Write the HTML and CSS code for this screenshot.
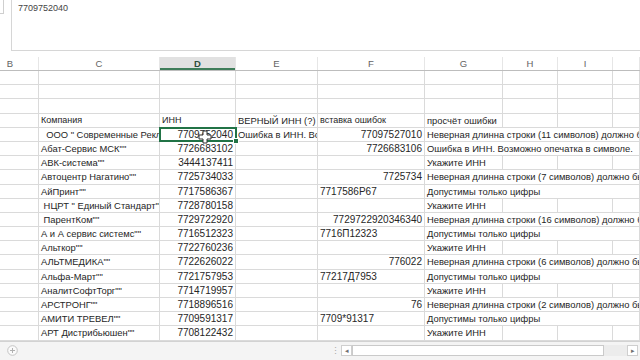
FILE: index.html
```html
<!DOCTYPE html>
<html lang="ru">
<head>
<meta charset="utf-8">
<title>ИНН</title>
<link rel="stylesheet" href="styles.css">
</head>
<body>
<div class="app">
  <div class="formula">
    <div class="namecol"><div class="namebox"></div></div>
    <div class="fx">7709752040</div>
  </div>

  <div class="sheet">
    <div class="row hdr">
      <div class="c first">B</div><div class="c">C</div><div class="c act">D</div><div class="c">E</div><div class="c">F</div><div class="c">G</div><div class="c">H</div><div class="c">I</div><div class="c"></div>
    </div>

    <div class="row"><div class="c"></div><div class="c"></div><div class="c"></div><div class="c"></div><div class="c"></div><div class="c"></div><div class="c"></div><div class="c"></div><div class="c"></div></div>
    <div class="row"><div class="c"></div><div class="c"></div><div class="c"></div><div class="c"></div><div class="c"></div><div class="c"></div><div class="c"></div><div class="c"></div><div class="c"></div></div>
    <div class="row"><div class="c"></div><div class="c"></div><div class="c"></div><div class="c"></div><div class="c"></div><div class="c"></div><div class="c"></div><div class="c"></div><div class="c"></div></div>

    <div class="row"><div class="c"></div><div class="c small">Компания</div><div class="c small">ИНН</div><div class="c">ВЕРНЫЙ ИНН (?)</div><div class="c small">вставка ошибок</div><div class="c">просчёт ошибки</div><div class="c"></div><div class="c"></div><div class="c"></div></div>

    <div class="row"><div class="c"></div><div class="c">  ООО " Современные Рекламные Технологии""</div><div class="c r n sel">7709752040</div><div class="c">Ошибка в ИНН. Возможно опечатка в символе.</div><div class="c r n">77097527010</div><div class="c long">Неверная длинна строки (11 символов) должно быть 10 или 12</div></div>

    <div class="row"><div class="c"></div><div class="c">Абат-Сервис МСК""</div><div class="c r n">7726683102</div><div class="c"></div><div class="c r n">7726683106</div><div class="c long">Ошибка в ИНН. Возможно опечатка в символе.</div></div>

    <div class="row"><div class="c"></div><div class="c">АВК-система""</div><div class="c r n">3444137411</div><div class="c"></div><div class="c"></div><div class="c">Укажите ИНН</div><div class="c"></div><div class="c"></div><div class="c"></div></div>

    <div class="row"><div class="c"></div><div class="c">Автоцентр Нагатино""</div><div class="c r n">7725734033</div><div class="c"></div><div class="c r n">7725734</div><div class="c long">Неверная длинна строки (7 символов) должно быть 10 или 12</div></div>

    <div class="row"><div class="c"></div><div class="c">АйПринт""</div><div class="c r n">7717586367</div><div class="c"></div><div class="c n">7717586Р67</div><div class="c long">Допустимы только цифры</div></div>

    <div class="row"><div class="c"></div><div class="c"> НЦРТ " Единый Стандарт""</div><div class="c r n">7728780158</div><div class="c"></div><div class="c"></div><div class="c">Укажите ИНН</div><div class="c"></div><div class="c"></div><div class="c"></div></div>

    <div class="row"><div class="c"></div><div class="c"> ПарентКом""</div><div class="c r n">7729722920</div><div class="c"></div><div class="c r n">7729722920346340</div><div class="c long">Неверная длинна строки (16 символов) должно быть 10 или 12</div></div>

    <div class="row"><div class="c"></div><div class="c">А и А сервис системс""</div><div class="c r n">7716512323</div><div class="c"></div><div class="c n">7716П12323</div><div class="c long">Допустимы только цифры</div></div>

    <div class="row"><div class="c"></div><div class="c">Альткор""</div><div class="c r n">7722760236</div><div class="c"></div><div class="c"></div><div class="c">Укажите ИНН</div><div class="c"></div><div class="c"></div><div class="c"></div></div>

    <div class="row"><div class="c"></div><div class="c">АЛЬТМЕДИКА""</div><div class="c r n">7722626022</div><div class="c"></div><div class="c r n">776022</div><div class="c long">Неверная длинна строки (6 символов) должно быть 10 или 12</div></div>

    <div class="row"><div class="c"></div><div class="c">Альфа-Март""</div><div class="c r n">7721757953</div><div class="c"></div><div class="c n">77217Д7953</div><div class="c long">Допустимы только цифры</div></div>

    <div class="row"><div class="c"></div><div class="c">АналитСофтТорг""</div><div class="c r n">7714719957</div><div class="c"></div><div class="c"></div><div class="c">Укажите ИНН</div><div class="c"></div><div class="c"></div><div class="c"></div></div>

    <div class="row"><div class="c"></div><div class="c">АРСТРОНГ""</div><div class="c r n">7718896516</div><div class="c"></div><div class="c r n">76</div><div class="c long">Неверная длинна строки (2 символов) должно быть 10 или 12</div></div>

    <div class="row"><div class="c"></div><div class="c">АМИТИ ТРЕВЕЛ""</div><div class="c r n">7709591317</div><div class="c"></div><div class="c n">7709*91317</div><div class="c long">Допустимы только цифры</div></div>

    <div class="row"><div class="c"></div><div class="c">АРТ Дистрибьюшен""</div><div class="c r n">7708122432</div><div class="c"></div><div class="c"></div><div class="c">Укажите ИНН</div><div class="c"></div><div class="c"></div><div class="c"></div></div>

    <svg class="cursor" width="14" height="14" viewBox="0 0 14 14">
      <path d="M5 1h4v4h4v4h-4v4h-4v-4h-4v-4h4z" fill="#fff" stroke="#333" stroke-width="1"/>
    </svg>
  </div>

  <div class="tabs">
    <div class="plus">
      <svg width="11" height="11" viewBox="0 0 11 11"><circle cx="5.5" cy="5.5" r="4.8" fill="#fafafa" stroke="#c4c4c4"/><path d="M5.5 3v5M3 5.5h5" stroke="#b0b0b0" stroke-width="1"/></svg>
    </div>
    <div class="scroll">
      <span class="dots">⋮</span>
      <span class="arrow">◂</span>
      <span class="track"><span class="thumb"></span></span>
      <span class="arrow">▸</span>
    </div>
  </div>
</div>
</body>
</html>
```

FILE: styles.css
```css
html, body {
  margin: 0;
  padding: 0;
  background: #ffffff;
}
body {
  width: 640px;
  height: 360px;
  overflow: hidden;
  font-family: "Liberation Sans", Arial, sans-serif;
  color: #262626;
}
.app {
  width: 640px;
  height: 360px;
  display: flex;
  flex-direction: column;
}

/* formula bar */
.formula {
  display: flex;
  height: 51px;
  flex: none;
}
.namecol {
  width: 11px;
  flex: none;
}
.namebox {
  width: 3px;
  height: 13px;
  border-right: 1px solid #cfcfcf;
  border-bottom: 1px solid #cfcfcf;
}
.fx {
  flex: 1;
  border-left: 1px solid #d6d6d6;
  border-bottom: 1px solid #d6d6d6;
  padding: 3px 6px;
  font-size: 9px;
  line-height: 11px;
  color: #444;
}

/* sheet */
.sheet {
  position: relative;
  margin-top: 6px;
  flex: none;
}
.row {
  display: grid;
  grid-template-columns: 39px 121px 76px 82px 107px 78px 55px 55px 1fr;
  height: 14.2px;
  box-sizing: border-box;
  border-bottom: 1px solid #dadada;
}
.c {
  box-sizing: border-box;
  border-right: 1px solid #dadada;
  padding: 0 2px;
  font-size: 9.4px;
  line-height: 13px;
  white-space: pre;
  overflow: hidden;
}
.c.small {
  font-size: 9px;
}
.c.n {
  font-size: 10px;
}
.c.r {
  text-align: right;
}
.c.long {
  grid-column: 6 / -1;
}
.row.hdr {
  height: 14px;
  border-bottom: 1px solid #bdbdbd;
}
.hdr .c {
  text-align: center;
  color: #636363;
  font-size: 9.5px;
  line-height: 13px;
  border-right: 1px solid #e6e6e6;
}
.hdr .c.first {
  padding-right: 20px;
}
.hdr .c.act {
  background: #e1e1e1;
  color: #2f4f3c;
  font-weight: bold;
  box-shadow: inset 0 -2px 0 #3f7d5a;
}
.c.sel {
  position: relative;
  overflow: visible;
  z-index: 2;
}
.c.sel::after {
  content: "";
  position: absolute;
  left: -1px;
  top: -1px;
  right: -2px;
  bottom: -1px;
  border: 2px solid #217346;
  box-sizing: border-box;
}
.c.sel::before {
  content: "";
  position: absolute;
  right: -4px;
  bottom: -3px;
  width: 4px;
  height: 4px;
  background: #217346;
  border: 1px solid #fff;
  z-index: 3;
}
.cursor {
  position: absolute;
  left: 198px;
  top: 73px;
  z-index: 5;
}

/* bottom tabs */
.tabs {
  flex: 1;
  display: flex;
  align-items: center;
  background: #f4f4f4;
  border-top: 1px solid #d2d2d2;
  padding-left: 7px;
}
.plus {
  width: 11px;
  height: 11px;
  display: flex;
}
.scroll {
  margin-left: auto;
  display: flex;
  align-items: center;
  width: 307px;
  height: 11px;
  padding-right: 2px;
}
.dots {
  color: #a8a8a8;
  font-size: 9px;
  width: 10px;
}
.arrow {
  width: 9px;
  height: 9px;
  border: 1px solid #cfcfcf;
  background: #fff;
  color: #707070;
  font-size: 7px;
  line-height: 9px;
  text-align: center;
}
.track {
  flex: 1;
  height: 11px;
  display: flex;
  align-items: center;
  background: #ececec;
}
.thumb {
  width: 250px;
  height: 9px;
  background: #fff;
  border: 1px solid #cacaca;
}
```
